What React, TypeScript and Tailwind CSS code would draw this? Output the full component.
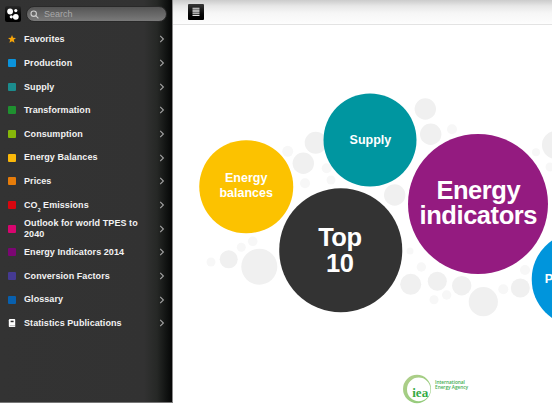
import React from "react";

interface MenuEntry {
  label: React.ReactNode;
  color?: string;
  icon?: "star" | "book";
}

const menu: MenuEntry[] = [
  { label: "Favorites", icon: "star" },
  { label: "Production", color: "bg-[#0b93db]" },
  { label: "Supply", color: "bg-[#1b8c8d]" },
  { label: "Transformation", color: "bg-[#1f9130]" },
  { label: "Consumption", color: "bg-[#86b70a]" },
  { label: "Energy Balances", color: "bg-[#fab80a]" },
  { label: "Prices", color: "bg-[#e67c0a]" },
  {
    label: (
      <>
        CO<span className="relative top-[4px] text-[5px] leading-none">2</span> Emissions
      </>
    ),
    color: "bg-[#d9060f]",
  },
  { label: "Outlook for world TPES to 2040", color: "bg-[#d8056f]" },
  { label: "Energy Indicators 2014", color: "bg-[#7b0673]" },
  { label: "Conversion Factors", color: "bg-[#453a92]" },
  { label: "Glossary", color: "bg-[#0860ae]" },
  { label: "Statistics Publications", icon: "book" },
];

// Decorative grey dots: [cx, cy, r]
const dots = [
  [315.7, 142.7, 11],
  [303.3, 163.3, 10.7],
  [259.3, 266.7, 18],
  [228.7, 259.3, 9],
  [425.3, 109, 10.7],
  [430.7, 134.3, 10.7],
  [394.7, 195, 10.7],
  [556, 145, 14],
  [410.7, 284.3, 10.5],
  [437.3, 281.3, 9.5],
  [461.7, 285.7, 9.7],
  [483.3, 301.7, 14.6],
  [520.3, 288, 9.5],
];

const faintDots = [
  [287.7, 151.3, 5.5],
  [305, 183.3, 5],
  [252.7, 241.3, 4.8],
  [241.3, 247.3, 4.5],
  [211, 262, 4.5],
  [326.7, 168.3, 5],
  [331, 180, 4.5],
  [452, 129.3, 5],
  [536, 152.3, 4],
  [550, 167, 4.5],
  [503.3, 289.3, 5],
  [525, 270, 5],
  [421.3, 267, 4.7],
  [410, 251, 3.5],
  [434, 299.7, 4.5],
  [446.7, 295, 4.7],
];

const Chevron = () => (
  <svg width="6" height="8" viewBox="0 0 6 8" fill="none" stroke="#a5a5a5" strokeWidth="1.1">
    <path d="M1.2 0.8 4.4 4 1.2 7.2" />
  </svg>
);

const EntryIcon = ({ entry }: { entry: MenuEntry }) => {
  if (entry.icon === "star") {
    return (
      <svg width="8" height="8" viewBox="0 0 8 8" fill="#f6a50b">
        <path d="M4 0 5.1 2.7 8 2.9 5.8 4.8 6.6 7.8 4 6.2 1.4 7.8 2.2 4.8 0 2.9 2.9 2.7z" />
      </svg>
    );
  }
  if (entry.icon === "book") {
    return (
      <svg width="8" height="8" viewBox="0 0 8 8">
        <path d="M2 0h4.4q.8 0 .8.8V8H1.6Q.8 8 .8 7.2V1.2Q.8 0 2 0z" fill="#fff" />
        <path d="M2.6 1.7h3v1.5h-3z" fill="#333" />
        <path d="M1.8 6.7h5.4" stroke="#777" strokeWidth=".5" />
      </svg>
    );
  }
  return <div className={`h-2 w-2 rounded-[1px] ${entry.color}`} />;
};

const Sidebar = () => (
  <aside className="flex h-[403px] w-[173px] shrink-0 flex-col border-r border-b border-r-[#8a8a8a] border-b-[#777] bg-[linear-gradient(to_right,#333_0,#323232_144px,#262826_157px,#0d0f0e_168px,#060606_172px)]">
    <div className="flex h-[28px] shrink-0 items-center gap-[5px] pl-[5px]">
      <div className="flex h-4 w-4 items-center justify-center rounded-[2px] bg-linear-to-b from-[#292929] to-black">
        <svg width="14" height="14" viewBox="0 0 14 14" fill="#fff">
          <circle cx="4.1" cy="4.5" r="2.9" />
          <circle cx="9.8" cy="3.6" r="1.6" />
          <circle cx="5.3" cy="9.8" r="1.6" />
          <circle cx="9.8" cy="9.8" r="2.9" />
        </svg>
      </div>
      <div className="flex h-4 w-[141px] items-center rounded-full border border-[#292929] bg-linear-to-b from-[#555] to-[#7a7a7a] pl-[3px]">
        <svg width="9" height="9" viewBox="0 0 9 9" fill="none" stroke="#cfcfcf" strokeWidth="1.1">
          <circle cx="3.7" cy="3.7" r="2.7" />
          <path d="m5.7 5.7 2.7 2.7" />
        </svg>
        <span className="ml-[5px] text-[9px] leading-none text-[#a9a9a9]">Search</span>
      </div>
    </div>
    <nav className="-mt-[0.4px]">
      {menu.map((entry, i) => (
        <div key={i} className="flex h-[23.67px] items-center pr-[7px] pl-2">
          <EntryIcon entry={entry} />
          <span className="ml-2 w-[124px] text-[9px] leading-[10.5px] font-bold tracking-[0.07px] text-[#f2f2f2]">
            {entry.label}
          </span>
          <div className="ml-auto">
            <Chevron />
          </div>
        </div>
      ))}
    </nav>
  </aside>
);

const bubble =
  "absolute flex -translate-x-1/2 -translate-y-1/2 items-center justify-center rounded-full text-center font-bold text-white";

export default function App() {
  return (
    <div className="relative flex h-[414px] w-[552px] overflow-hidden bg-white font-['Liberation_Sans',sans-serif]">
      <Sidebar />

      <main className="flex min-w-0 flex-1 flex-col">
        <header className="flex h-[25px] shrink-0 items-center border-b border-[#e3e3e3] bg-[linear-gradient(to_bottom,#cbcbcb_0,#e7e7e7_6px,#f6f6f6_13px,#fdfdfd_24px)] pl-[15px]">
          <div className="flex h-4 w-4 items-center justify-center rounded-[1px] bg-linear-to-b from-[#383838] to-black">
            <svg width="8" height="10" viewBox="0 0 8 10" stroke="#e6e6e6" strokeWidth="1.1">
              <path d="M.5 1.3h7M.5 3.1h7M.5 4.9h7M.5 6.7h7M.5 8.5h7" />
            </svg>
          </div>
        </header>

        {/* IEA logo */}
        <footer className="mt-auto mb-[9px] flex items-start pl-[229px]">
          <svg width="31" height="31" viewBox="0 0 31 31">
            <defs>
              <linearGradient id="ring" x1="0" y1="0" x2="1" y2="1">
                <stop offset="0" stopColor="#b3cf8c" />
                <stop offset="1" stopColor="#8cca77" />
              </linearGradient>
            </defs>
            <path
              fillRule="evenodd"
              fill="url(#ring)"
              d="M15 .8a14 14.2 0 1 1 0 28.4 14 14.2 0 1 1 0-28.4zM16.7 3.6a11.7 11.8 0 1 0 0 23.6 11.7 11.8 0 1 0 0-23.6z"
            />
            <text
              x="10.2"
              y="22.8"
              fontFamily="Liberation Serif, serif"
              fontWeight="bold"
              fontSize="13"
              textLength="16"
              lengthAdjust="spacingAndGlyphs"
              fill="#35aa45"
            >
              iea
            </text>
          </svg>
          <p className="mt-[6px] ml-[2px] font-['Open_Sans',sans-serif] text-[4.8px] leading-[5.3px] font-semibold tracking-[-0.04px] whitespace-nowrap text-[#42ad51]">
            International
            <br />
            Energy Agency
          </p>
        </footer>
      </main>

      {/* Bubble canvas */}
      <svg className="pointer-events-none absolute inset-0" width="552" height="414">
        {faintDots.map(([cx, cy, r], i) => (
          <circle key={i} cx={cx} cy={cy} r={r} fill="#f7f7f7" />
        ))}
        {dots.map(([cx, cy, r], i) => (
          <circle key={i} cx={cx} cy={cy} r={r} fill="#f0f0f0" />
        ))}
      </svg>
      <div className={`${bubble} top-[186.5px] left-[246.2px] h-[93.5px] w-[93.5px] bg-[#fcc200] text-[12.5px] leading-[15px]`}>
        Energy
        <br />
        balances
      </div>
      <div className={`${bubble} top-[140.3px] left-[370.4px] h-[93px] w-[93px] bg-[#0096a0] text-[12.5px] leading-[15px]`}>
        Supply
      </div>
      <div className={`${bubble} top-[250px] left-[340.8px] h-[123.5px] w-[123.5px] bg-[#333] pr-[2px] text-[25.5px] leading-[26px] tracking-[-0.5px]`}>
        Top
        <br />
        10
      </div>
      <div className={`${bubble} top-[204px] left-[478.3px] h-[140px] w-[140px] bg-[#941b80] pb-[2px] text-[25.5px] leading-[25.5px] tracking-[-0.45px]`}>
        Energy
        <br />
        indicators
      </div>
      <div className={`${bubble} top-[279px] left-[577.7px] h-[92.5px] w-[92.5px] bg-[#0095dc] text-[12.5px] leading-[15px]`}>
        Production
      </div>
    </div>
  );
}
